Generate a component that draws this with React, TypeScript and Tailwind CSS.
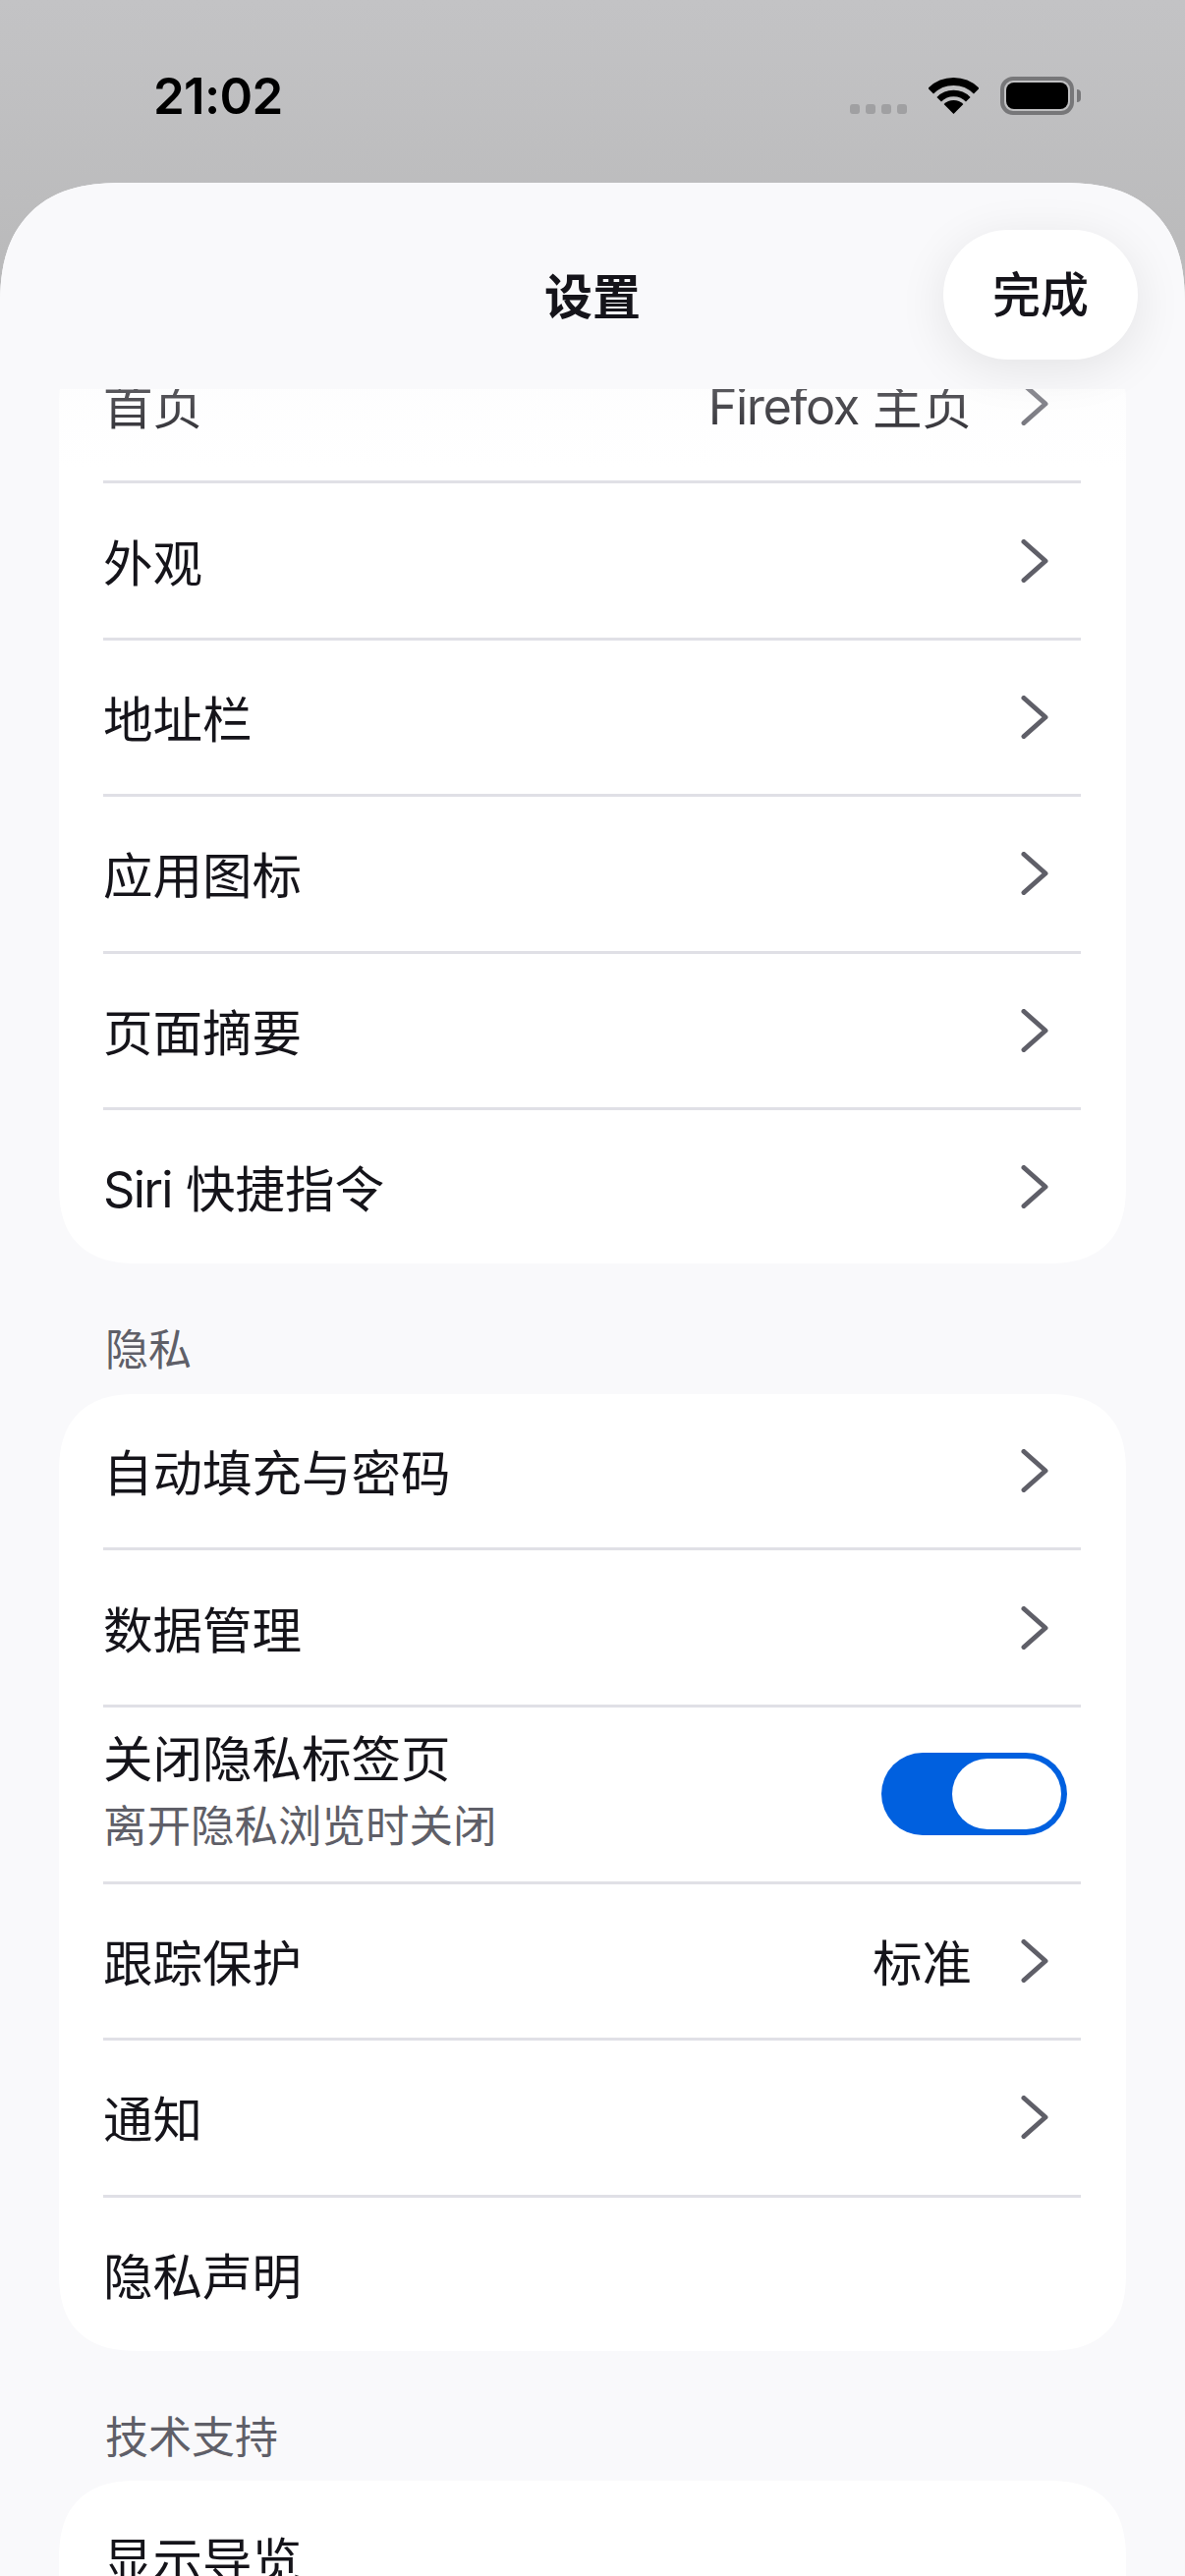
import type { ReactNode } from "react";

const FONT = "font-['Inter','Noto_Sans_CJK_SC',sans-serif]";

type RowData = { id: string; label: ReactNode; value?: ReactNode; sub?: string; toggle?: boolean; noChevron?: boolean };

const GENERAL: RowData[] = [
  { id: "home", label: "首页", value: <><span className="tracking-[-1.5px]">Firefox</span> 主页</> },
  { id: "look", label: "外观" },
  { id: "bar", label: "地址栏" },
  { id: "icon", label: "应用图标" },
  { id: "summary", label: "页面摘要" },
  { id: "siri", label: <><span className="tracking-[-1.7px]">Siri</span> 快捷指令</> },
];

const PRIVACY: RowData[] = [
  { id: "autofill", label: "自动填充与密码" },
  { id: "data", label: "数据管理" },
  { id: "close", label: "关闭隐私标签页", sub: "离开隐私浏览时关闭", toggle: true },
  { id: "track", label: "跟踪保护", value: "标准" },
  { id: "notify", label: "通知" },
  { id: "policy", label: "隐私声明", noChevron: true },
];

const SUPPORT: RowData[] = [
  { id: "tour", label: "显示导览", noChevron: true },
  { id: "feedback", label: "发送反馈" },
];

function Chevron() {
  return (
    <svg width="28" height="44" viewBox="0 0 28 44" fill="none" className="ml-[50px] mr-[79px] shrink-0">
      <path d="M3 2.5 L25 22 L3 41.5" stroke="#5f5f68" strokeWidth="5" strokeLinecap="round" strokeLinejoin="round" />
    </svg>
  );
}

function Toggle() {
  return (
    <div className="mr-[60px] flex h-[84px] w-[189px] items-center justify-end rounded-full bg-[#0060df] pr-[6px]">
      <div className="h-[72px] w-[111px] rounded-full bg-white" />
    </div>
  );
}

function Row({ row, last }: { row: RowData; last: boolean }) {
  return (
    <>
      <div className={`flex items-center pl-[45px] ${row.sub ? "h-[177px]" : "h-[156.4px]"}`}>
        <div className={`flex-1 ${row.sub ? "pb-[5px]" : "pt-[6px]"}`}>
          <div className="text-[50.5px] leading-[66px] text-[#15141a]">{row.label}</div>
          {row.sub && <div className="mt-[5px] text-[44.5px] leading-[60px] text-[#5f5f68]">{row.sub}</div>}
        </div>
        {row.value && <span className="pt-[6px] text-[50.5px] leading-[66px] text-[#15141a]">{row.value}</span>}
        {row.toggle ? <Toggle /> : !row.noChevron && <Chevron />}
      </div>
      {!last && <div className="ml-[45px] mr-[46px] h-[3px] bg-[#e0e0e6]" />}
    </>
  );
}

function Card({ rows }: { rows: RowData[] }) {
  return (
    <div className="mx-[60px] rounded-[80px] bg-white [corner-shape:superellipse(1.3)]">
      {rows.map((r, i) => (
        <Row key={r.id} row={r} last={i === rows.length - 1} />
      ))}
    </div>
  );
}

function SectionLabel({ children }: { children: string }) {
  return <div className="h-[132.6px] pl-[107px] pt-[58px] text-[44px] leading-[60px] text-[#5f5f68]">{children}</div>;
}

function StatusBar() {
  return (
    <div className="flex h-[186px] shrink-0 items-start">
      <div className="ml-[156px] mt-[67px] text-[51px] leading-[62px] font-semibold tracking-[-0.7px] text-black">21:02</div>
      <div className="ml-auto mr-[106px] mt-[78px] flex items-start">
        <div className="mr-[22px] mt-[28px] flex gap-[6px]">
          <div className="h-[10px] w-[10px] rounded-[3px] bg-[#a0a0a2]" />
          <div className="h-[10px] w-[10px] rounded-[3px] bg-[#a0a0a2]" />
          <div className="h-[10px] w-[10px] rounded-[3px] bg-[#a0a0a2]" />
          <div className="h-[10px] w-[10px] rounded-[3px] bg-[#a0a0a2]" />
        </div>
        <svg width="51" height="38" viewBox="0 0 51 38" fill="none" className="mr-[22px] mt-[1px]">
          <path d="M2.2 13.7 A33 33 0 0 1 48.8 13.7" stroke="#000" strokeWidth="8" />
          <path d="M10.7 22.2 A21 21 0 0 1 40.3 22.2" stroke="#000" strokeWidth="6.5" />
          <path d="M25.5 37 L15.6 27.1 A14 14 0 0 1 35.4 27.1 Z" fill="#000" />
        </svg>
        <div className="flex h-[39px] w-[75px] items-center justify-center rounded-[13px] border-[4px] border-[#777779]">
          <div className="h-[27px] w-[63px] rounded-[8px] bg-black" />
        </div>
        <div className="ml-[3px] mt-[13px] h-[13px] w-[4px] rounded-r-full bg-[#777779]" />
      </div>
    </div>
  );
}

export default function App() {
  return (
    <div className={`${FONT} flex h-[2622px] w-[1206px] flex-col overflow-hidden bg-gradient-to-b from-[#c3c3c5] to-[#b9b9ba] to-[300px]`}>
      <StatusBar />
      <div className="flex min-h-0 flex-1 flex-col rounded-t-[125px] bg-[#f9f9fb] [corner-shape:superellipse(1.3)]">
        {/* 标题栏 */}
        <div className="relative z-10 flex h-[210px] shrink-0 items-center justify-center rounded-t-[125px] bg-[#f9f9fb] [corner-shape:superellipse(1.3)]">
          <span className="mt-[24px] text-[49px] leading-[60px] font-semibold text-[#15141a]">设置</span>
          <button className="absolute right-[48px] top-[48px] h-[132px] w-[198px] rounded-full bg-white pt-[2px] text-[49px] font-medium text-[#15141a] shadow-[0_10px_50px_rgba(0,0,0,0.09)]">
            完成
          </button>
        </div>

        {/* 滚动内容 */}
        <div className="relative min-h-0 flex-1 overflow-hidden">
          <div className="-mt-[63px]">
            <Card rows={GENERAL} />
            <SectionLabel>隐私</SectionLabel>
            <Card rows={PRIVACY} />
            <SectionLabel>技术支持</SectionLabel>
            <Card rows={SUPPORT} />
          </div>
          <div className="absolute inset-x-0 top-0 h-[80px] bg-gradient-to-b from-[#f9f9fb]/30 to-transparent" />
        </div>
      </div>
    </div>
  );
}
